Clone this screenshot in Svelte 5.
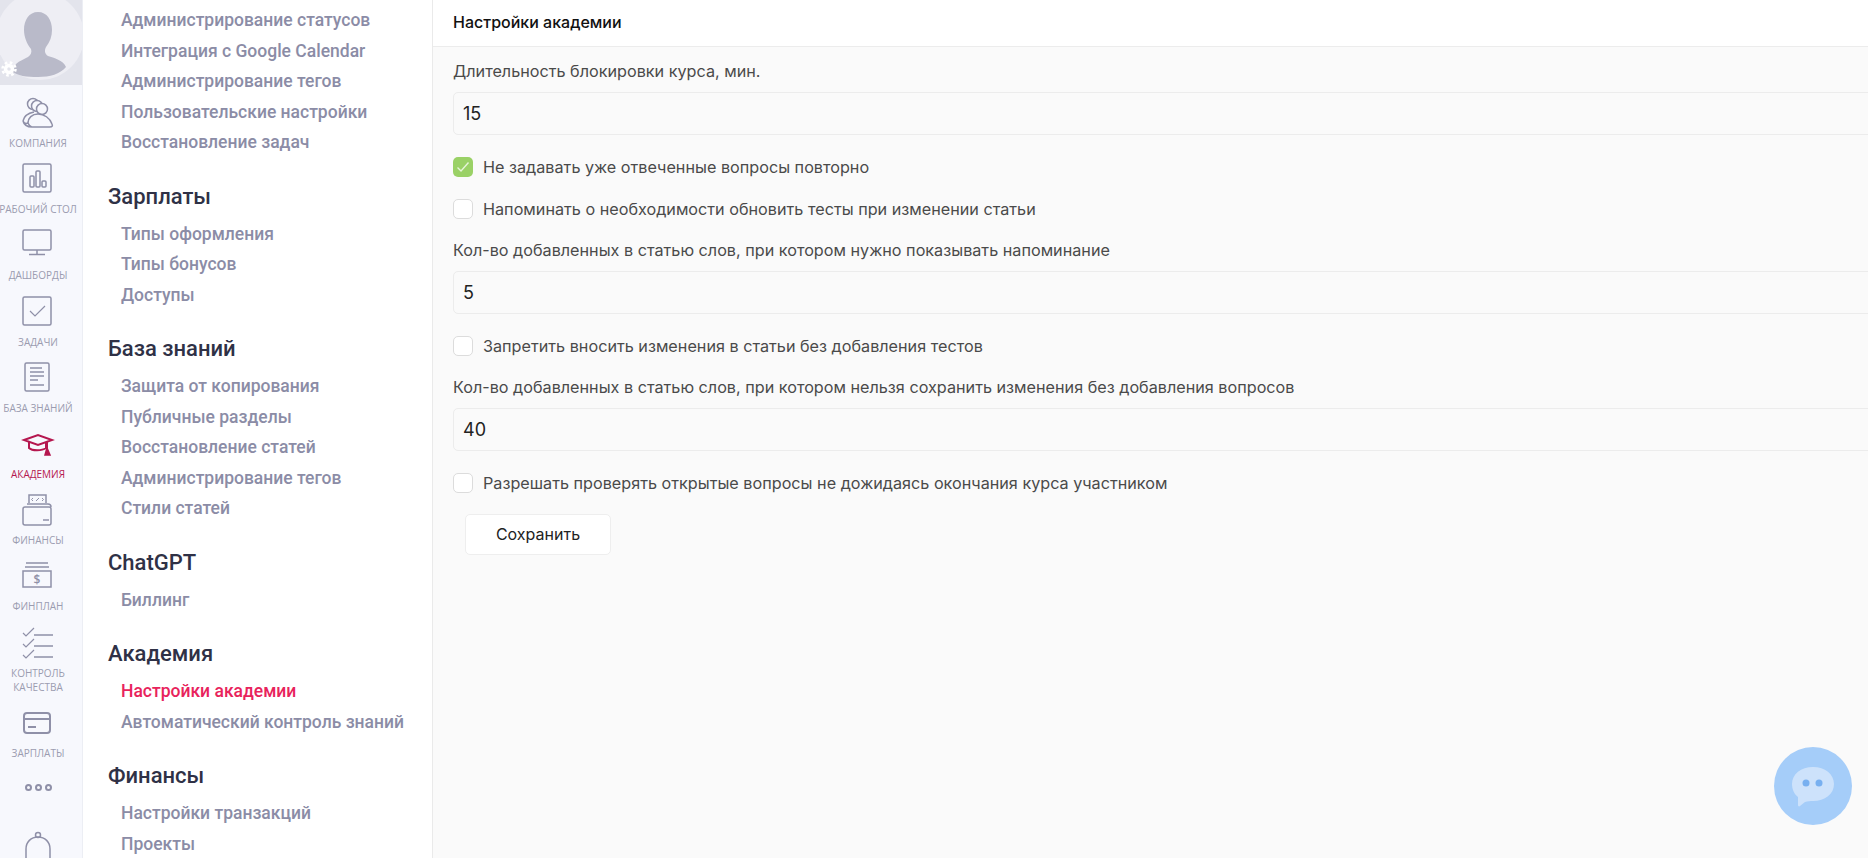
<script>
  const rail = [
    { id: 'company', label: 'КОМПАНИЯ' },
    { id: 'desk', label: 'РАБОЧИЙ СТОЛ' },
    { id: 'dash', label: 'ДАШБОРДЫ' },
    { id: 'tasks', label: 'ЗАДАЧИ' },
    { id: 'kb', label: 'БАЗА ЗНАНИЙ' },
    { id: 'academy', label: 'АКАДЕМИЯ', active: true },
    { id: 'finance', label: 'ФИНАНСЫ' },
    { id: 'finplan', label: 'ФИНПЛАН' },
    { id: 'quality', label: 'КОНТРОЛЬ КАЧЕСТВА' },
    { id: 'salary', label: 'ЗАРПЛАТЫ' }
  ]

  const groups = [
    {
      items: [
        'Администрирование статусов',
        'Интеграция с Google Calendar',
        'Администрирование тегов',
        'Пользовательские настройки',
        'Восстановление задач'
      ]
    },
    { title: 'Зарплаты', items: ['Типы оформления', 'Типы бонусов', 'Доступы'] },
    {
      title: 'База знаний',
      items: [
        'Защита от копирования',
        'Публичные разделы',
        'Восстановление статей',
        'Администрирование тегов',
        'Стили статей'
      ]
    },
    { title: 'ChatGPT', items: ['Биллинг'] },
    { title: 'Академия', items: ['Настройки академии', 'Автоматический контроль знаний'] },
    { title: 'Финансы', items: ['Настройки транзакций', 'Проекты'] }
  ]

  let noRepeat = $state(true)
  let remind = $state(false)
  let forbid = $state(false)
  let allowOpen = $state(false)
</script>

{#snippet check(label, checked)}
  <div class="check">
    <span class="box" class:on={checked}>
      {#if checked}
        <svg viewBox="0 0 20 20" width="20" height="20"><path d="M4.500 10.500l3.500 3.500L15.500 5.500" fill="none" stroke="#e6f4d8" stroke-width="1.400" /></svg>
      {/if}
    </span>
    <span>{label}</span>
  </div>
{/snippet}

<div class="page">
  <nav class="rail">
    <div class="avatar">
      <svg viewBox="0 0 84 85" width="84" height="85">
        <circle cx="40" cy="36" r="44" fill="#eeeef4" />
        <path d="M38 12c-9 0-14 8-14 18 0 7 3 14 7 19 1 3 0 6-3 8-5 3-14 5-16 14 5 5 15 6 26 6 12 0 22-3 28-10-3-7-12-9-18-11-3-2-4-5-2-9 4-5 6-11 6-17 0-10-5-18-14-18z" fill="#b9bac9" />
        <circle cx="9" cy="69" r="3.500" fill="none" stroke="#fff" stroke-width="3.500" />
        <circle cx="9" cy="69" r="6.500" fill="none" stroke="#fff" stroke-width="2.500" stroke-dasharray="2.600 2.500" />
      </svg>
    </div>

    {#each rail as item}
      <div class="rail-item" class:active={item.active}>
        <svg class="ico" viewBox="0 0 40 40" width="40" height="40" fill="none" stroke="currentColor" stroke-width="1.500">
          {#if item.id === 'company'}
            <circle cx="15" cy="9" r="5.500" />
            <circle cx="19" cy="11" r="5.500" fill="#f7f8fd" />
            <circle cx="24" cy="14" r="5.500" fill="#f7f8fd" />
            <path d="M5 26c1-5 6-8 11-9" />
            <path d="M10 28c1-5 6-8 11-9" />
            <path d="M14 32c-4 0-8-2-9-6 1 2 3 3 5 2 1 2 2 4 4 4h18c2 0 3-1 2-3-2-6-8-10-14-10-6 0-10 4-10 9" fill="#f7f8fd" />
          {:else if item.id === 'desk'}
            <rect x="5" y="3" width="28" height="28" rx="1.500" />
            <rect x="12" y="15" width="4" height="11" rx="1" />
            <rect x="18" y="10" width="4" height="16" rx="1" />
            <rect x="24" y="20" width="4" height="6" rx="1" />
          {:else if item.id === 'dash'}
            <rect x="5" y="3" width="28" height="20" rx="1.500" />
            <path d="M19 23v4M11 27.500h16" />
          {:else if item.id === 'tasks'}
            <rect x="5" y="3" width="28" height="28" rx="1.500" />
            <path d="M12 17l5 5 10-10" stroke-width="1.200" />
          {:else if item.id === 'kb'}
            <rect x="7" y="3" width="24" height="28" rx="1.500" />
            <path d="M12 8h12M12 12h14M12 16h14M12 20h8M12 25h14" />
          {:else if item.id === 'academy'}
            <path d="M6 14l14-5 14 5-14 5z" stroke-width="2" />
            <path d="M11 16v6c3 3 13 3 17 0v-6M29 15v8" stroke-width="2" />
            <path d="M29 22l-2 7h5z" fill="currentColor" />
          {:else if item.id === 'finance'}
            <path d="M11 11V3h17v8" />
            <path d="M15 6l-1.500 1.500L15 9M24 6l1.500 1.500L24 9M18 9l3-3" stroke-width="1" />
            <path d="M9 12h21c2 0 3 1 3 3" />
            <rect x="5" y="15" width="28" height="18" rx="2" />
            <path d="M25 28h6" />
          {:else if item.id === 'finplan'}
            <path d="M8 5h22M7 9h24" />
            <rect x="5" y="13" width="28" height="16" />
            <text x="19" y="26" class="dollar">$</text>
          {:else if item.id === 'quality'}
            <path d="M5 8l3 3 8-8M5 19l3 3 8-8M5 30l3 3 8-8" stroke-width="1.200" />
            <path d="M16 10h19M16 21h19M16 32h19" />
          {:else}
            <rect x="6" y="8" width="26" height="20" rx="3" stroke-width="2" />
            <path d="M6 14h26" stroke-width="2" />
            <path d="M10 22h8" stroke-width="2" />
          {/if}
        </svg>
        <span>{item.label}</span>
      </div>
    {/each}

    <div class="dots"><i></i><i></i><i></i></div>

    <svg class="bell" viewBox="0 0 40 50" width="40" height="50" fill="none" stroke="#8f90a8" stroke-width="1.500">
      <path d="M8 34V20c0-7 5-12 12-12s12 5 12 12v14l3 4H5z" />
      <circle cx="20" cy="6" r="2.500" />
      <path d="M16 38v8M24 38v8" />
    </svg>
  </nav>

  <aside class="side">
    {#each groups as group}
      <section>
        {#if group.title}<h3>{group.title}</h3>{/if}
        {#each group.items as link}
          <a class:current={link === 'Настройки академии'} href="#top">{link}</a>
        {/each}
      </section>
    {/each}
  </aside>

  <main>
    <header>Настройки академии</header>
    <div class="form">
      <div class="field">
        <span class="label">Длительность блокировки курса, мин.</span>
        <div class="input">15</div>
      </div>
      {@render check('Не задавать уже отвеченные вопросы повторно', noRepeat)}
      {@render check('Напоминать о необходимости обновить тесты при изменении статьи', remind)}
      <div class="field">
        <span class="label">Кол-во добавленных в статью слов, при котором нужно показывать напоминание</span>
        <div class="input">5</div>
      </div>
      {@render check('Запретить вносить изменения в статьи без добавления тестов', forbid)}
      <div class="field">
        <span class="label">Кол-во добавленных в статью слов, при котором нельзя сохранить изменения без добавления вопросов</span>
        <div class="input">40</div>
      </div>
      {@render check('Разрешать проверять открытые вопросы не дожидаясь окончания курса участником', allowOpen)}
      <button>Сохранить</button>
    </div>
    <div class="chat">
      <svg viewBox="0 0 78 78" width="78" height="78">
        <circle cx="39" cy="39" r="39" fill="#a5cdf9" />
        <path d="M39 20c12 0 21 7 21 17s-9 17-21 17c-3 0-5 0-8 1l-5 4c-1 1-2 0-2-1v-8c-4-3-6-8-6-13 0-10 9-17 21-17z" fill="#cde2fb" />
        <circle cx="32" cy="36" r="3.500" fill="#78b0f0" />
        <circle cx="45" cy="36" r="3.500" fill="#78b0f0" />
      </svg>
    </div>
  </main>
</div>

<style>
  :global(body) {
    margin: 0;
    overflow: hidden;
  }
  .page {
    display: flex;
    height: 858px;
    overflow: hidden;
    background: #fff;
  }
  .rail {
    flex: 0 0 83px;
    box-sizing: border-box;
    background: #f7f8fd;
    border-right: 1px solid #eceef4;
    color: #8f90a8;
    font-family: 'Open Sans', sans-serif;
    overflow: hidden;
  }
  .avatar {
    height: 85px;
    margin-right: -1px;
    background: #e3e4ec;
  }
  .avatar svg {
    display: block;
  }
  .rail-item {
    display: flex;
    flex-direction: column;
    align-items: center;
    width: 76px;
    height: 66.2px;
    text-align: center;
    font-size: 10px;
    line-height: 14px;
    color: #9b9cb0;
    white-space: nowrap;
  }
  .rail-item:nth-of-type(10) {
    height: 80px;
    white-space: normal;
  }
  .rail-item .ico {
    display: block;
    margin-top: 10px;
    margin-bottom: 1px;
    flex: none;
    color: #8f90a8;
  }
  .rail-item.active,
  .rail-item.active .ico {
    color: #b5174f;
  }
  .dollar {
    font: 600 12px 'Open Sans', sans-serif;
    text-anchor: middle;
    fill: currentColor;
    stroke: none;
  }
  .dots {
    display: flex;
    justify-content: center;
    gap: 3px;
    width: 76px;
    margin-top: 23px;
  }
  .dots i {
    width: 3px;
    height: 3px;
    border: 2px solid #8f90a8;
    border-radius: 50%;
  }
  .bell {
    display: block;
    margin: 38px 0 0 18px;
  }
  .side {
    flex: 0 0 350px;
    box-sizing: border-box;
    padding: 5px 0 0 38px;
    border-right: 1px solid #eaeaea;
    font-family: Roboto, sans-serif;
    overflow: hidden;
  }
  section {
    margin-bottom: 24px;
  }
  h3 {
    margin: 0 0 7px -13px;
    font-size: 22px;
    line-height: 30px;
    font-weight: 500;
    color: #2f3146;
  }
  .side a {
    display: block;
    height: 30.5px;
    line-height: 30.5px;
    font-size: 17.5px;
    font-weight: 500;
    color: #8b8ca6;
    text-decoration: none;
    white-space: nowrap;
  }
  .side a.current {
    color: #e8235c;
  }
  main {
    flex: 1;
    min-width: 0;
    position: relative;
    background: #fafafa;
    font-family: Inter, sans-serif;
    overflow: hidden;
  }
  header {
    height: 47px;
    box-sizing: border-box;
    padding-left: 20px;
    line-height: 44px;
    font-size: 16px;
    font-weight: 500;
    color: #111;
    background: #fff;
    border-bottom: 1px solid #ececec;
  }
  .form {
    display: flex;
    flex-direction: column;
    align-items: flex-start;
    padding: 14px 0 0 20px;
    font-size: 16.2px;
    color: #4a4a4a;
  }
  .field {
    width: 1500px;
    display: flex;
    flex-direction: column;
  }
  .label {
    height: 31px;
    line-height: 20px;
    white-space: nowrap;
  }
  .input {
    height: 43px;
    box-sizing: border-box;
    padding-left: 9px;
    line-height: 41px;
    font-size: 18px;
    color: #222;
    background: #fafafa;
    border: 1px solid #ececec;
    border-radius: 5px;
  }
  .check {
    display: flex;
    align-items: center;
    gap: 10px;
    height: 42px;
    white-space: nowrap;
  }
  .field + .check,
  .check + .field {
    margin-top: 10.6px;
  }
  .box {
    width: 20px;
    height: 20px;
    box-sizing: border-box;
    background: #fff;
    border: 1px solid #dcdcdc;
    border-radius: 5px;
    display: block;
  }
  .box.on {
    background: #9ad166;
    border: 0;
  }
  .box svg {
    display: block;
  }
  button {
    width: 146px;
    height: 41px;
    margin: 10px 0 0 12px;
    font: 400 16px Inter, sans-serif;
    color: #222;
    background: #fff;
    border: 1px solid #eeeeee;
    border-radius: 5px;
  }
  .chat {
    position: absolute;
    right: 16px;
    bottom: 33px;
    height: 78px;
  }
</style>
